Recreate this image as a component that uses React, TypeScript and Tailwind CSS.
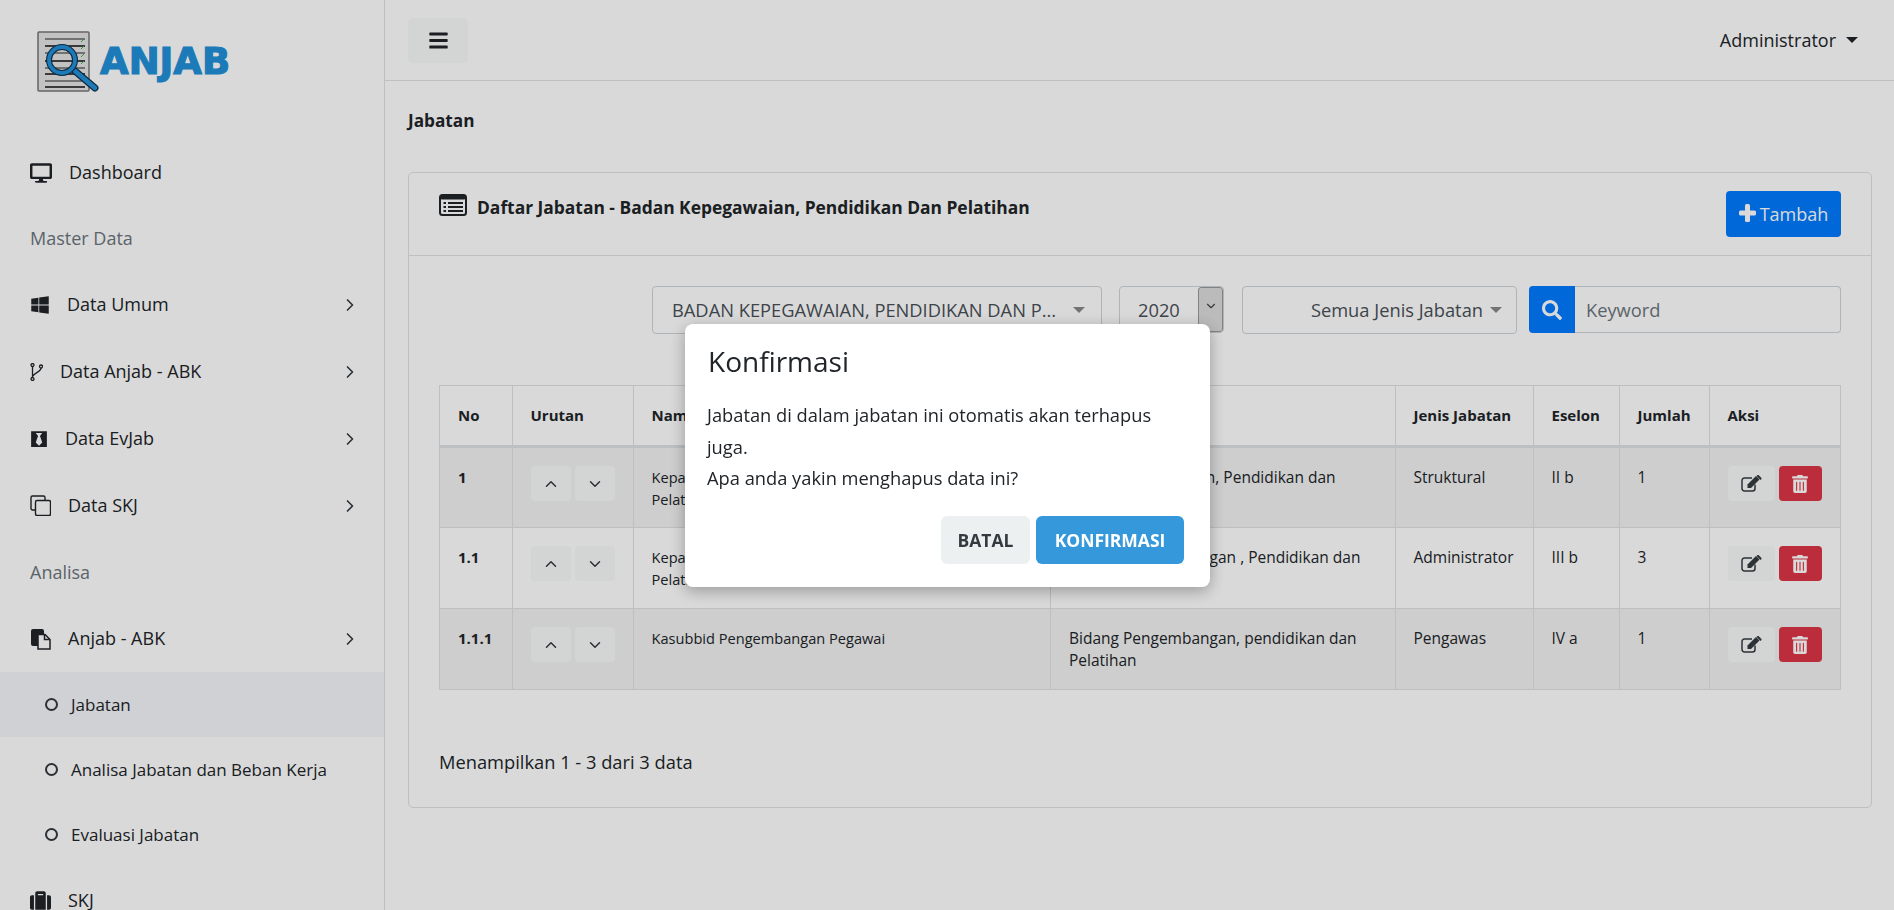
import type { ReactNode } from 'react';
import { ChevronDown, ChevronRight, ChevronUp } from 'lucide-react';
import { FaBars, FaBlackTie, FaDesktop, FaSearch, FaSuitcase, FaTrashAlt, FaWindows } from 'react-icons/fa';

const rows = [
  { no: '1', nama: 'Kepala Badan Kepegawaian, Pendidikan dan\nPelatihan', unit: 'Badan Kepegawaian, Pendidikan dan Pelatihan', jenis: 'Struktural', eselon: 'II b', jumlah: '1' },
  { no: '1.1', nama: 'Kepala Bidang Pengembangan, Pendidikan dan\nPelatihan', unit: 'Bidang Pengembangan , Pendidikan dan Pelatihan', jenis: 'Administrator', eselon: 'III b', jumlah: '3' },
  { no: '1.1.1', nama: 'Kasubbid Pengembangan Pegawai', unit: 'Bidang Pengembangan, pendidikan dan Pelatihan', jenis: 'Pengawas', eselon: 'IV a', jumlah: '1' },
];

const Logo = () => (
  <svg width="62" height="62" viewBox="0 0 62 62" className="shrink-0">
    <rect x="1" y="1" width="51" height="59" rx="1" fill="#e4e4e4" stroke="#777" strokeWidth="1.5" />
    {[8, 15, 22, 30, 37, 43, 50, 56].map((y, i) => (
      <line key={y} x1="8" x2="48" y1={y} y2={y} stroke={i % 2 ? '#111' : '#666'} strokeWidth="1.6" />
    ))}
    {[10, 17, 25, 32].map((y) => (
      <line key={y} x1="44" x2="47" y1={y + 1} y2={y - 2} stroke="#3fae49" strokeWidth="1" />
    ))}
    <line x1="38" y1="40" x2="58" y2="57" stroke="#10324a" strokeWidth="7" strokeLinecap="round" />
    <line x1="38" y1="40" x2="58" y2="57" stroke="#2190d9" strokeWidth="4.5" strokeLinecap="round" />
    <circle cx="25" cy="29" r="13" fill="none" stroke="#10324a" strokeWidth="6" />
    <circle cx="25" cy="29" r="13" fill="none" stroke="#2190d9" strokeWidth="3.8" />
  </svg>
);

const FilesIcon = () => (
  <svg width="21" height="22" viewBox="0 0 21 22" className="shrink-0 text-[#212529]">
    <path d="M1 3a2 2 0 0 1 2-2h9a2 2 0 0 1 2 2v15H3a2 2 0 0 1-2-2z" fill="currentColor" />
    <path d="M8 6.500h7l5 5V21H8z" fill="#fff" stroke="currentColor" strokeWidth="1.5" />
    <path d="M14.500 6.500v5h5" fill="none" stroke="currentColor" strokeWidth="1.5" />
  </svg>
);

const ForkIcon = () => (
  <svg width="13" height="18" viewBox="0 0 13 18" fill="none" stroke="#212529" strokeWidth="1.3" className="shrink-0">
    <circle cx="2.500" cy="2" r="1.500" />
    <circle cx="2.500" cy="16" r="1.500" />
    <circle cx="11" cy="3.500" r="1.500" />
    <path d="M2.500 3.500v11M11 5c0 3.500-6 4.500-8 8" />
  </svg>
);

const CloneIcon = () => (
  <svg width="21" height="21" viewBox="0 0 21 21" fill="none" stroke="#212529" strokeWidth="1.4" className="shrink-0">
    <path d="M5 15H2.500A1.500 1.500 0 0 1 1 13.500V2.500A1.500 1.500 0 0 1 2.500 1h11A1.500 1.500 0 0 1 15 2.500V5" />
    <rect x="5.500" y="5.500" width="15" height="15" rx="1.500" />
  </svg>
);

const ListIcon = () => (
  <svg width="28" height="22" viewBox="0 0 28 22" className="shrink-0 text-[#212529]">
    <rect x="1" y="1" width="26" height="20" rx="2.500" fill="none" stroke="currentColor" strokeWidth="2" />
    <rect x="1" y="1" width="26" height="4.500" rx="2" fill="currentColor" />
    {[9, 13, 17].map((y) => (
      <g key={y}>
        <rect x="4.500" y={y - 1} width="2.500" height="2" fill="currentColor" />
        <rect x="9" y={y - 1} width="15" height="2" fill="currentColor" />
      </g>
    ))}
  </svg>
);

const EditIcon = () => (
  <svg width="21" height="17" viewBox="0 0 21 17" fill="none" className="text-[#343a40]">
    <path d="M14 9.500v4a2.500 2.500 0 0 1-2.500 2.500H3.500A2.500 2.500 0 0 1 1 13.500v-8A2.500 2.500 0 0 1 3.500 3H11" stroke="currentColor" strokeWidth="1.5" />
    <path d="M6.500 9.500 15 1l3.500 3.500L10 13H6.500z" fill="currentColor" />
    <path d="M16.500 0h1l3 3v1l-1 1L15.500 1z" fill="currentColor" />
  </svg>
);

const PlusIcon = () => (
  <svg width="17" height="18" viewBox="0 0 17 18" fill="currentColor" className="shrink-0 mb-[3px]">
    <rect x="6" y="0" width="5" height="18" rx="1.500" />
    <rect x="0" y="6.500" width="17" height="5" rx="1.500" />
  </svg>
);

const MenuItem = ({ icon, label, arrow }: { icon: ReactNode; label: string; arrow?: boolean }) => (
  <div className="h-[67px] pl-[30px] pr-[24px] flex items-center gap-[17px] text-[#212529]">
    {icon}
    <span className="flex-1">{label}</span>
    {arrow && <ChevronRight className="w-[20px] h-[20px] text-[#343a40]" strokeWidth={2} />}
  </div>
);

const SubItem = ({ label, active }: { label: string; active?: boolean }) => (
  <div className={`h-[65px] pl-[45px] flex items-center gap-[13px] text-[17px] text-[#212529] ${active ? 'bg-[#f5f6fa]' : ''}`}>
    <span className="w-[13px] h-[13px] rounded-full border-2 border-[#343a40]" />
    <span>{label}</span>
  </div>
);

const Sidebar = () => (
  <aside className="w-[385px] h-[910px] shrink-0 border-r border-[#dee2e6] overflow-hidden text-[18px]">
    <div className="h-[139px] pl-[37px] pt-[31px] flex items-start gap-[1px]">
      <Logo />
      <span className="font-['DejaVu_Sans',sans-serif] font-bold text-[37px] leading-none mt-[12px] [-webkit-text-stroke:1.2px_#2190d9] text-[#2190d9]">ANJAB</span>
    </div>
    <MenuItem icon={<FaDesktop className="w-[22px] h-[22px]" />} label="Dashboard" />
    <div className="h-[65px] pl-[30px] flex items-center text-[#6c757d]">Master Data</div>
    <MenuItem icon={<FaWindows className="w-[20px] h-[20px]" />} label="Data Umum" arrow />
    <MenuItem icon={<ForkIcon />} label="Data Anjab - ABK" arrow />
    <MenuItem icon={<FaBlackTie className="w-[18px] h-[18px]" />} label="Data EvJab" arrow />
    <MenuItem icon={<CloneIcon />} label="Data SKJ" arrow />
    <div className="h-[66px] pl-[30px] flex items-center text-[#6c757d]">Analisa</div>
    <MenuItem icon={<FilesIcon />} label="Anjab - ABK" arrow />
    <SubItem label="Jabatan" active />
    <SubItem label="Analisa Jabatan dan Beban Kerja" />
    <SubItem label="Evaluasi Jabatan" />
    <MenuItem icon={<FaSuitcase className="w-[21px] h-[21px]" />} label="SKJ" />
  </aside>
);

const Filters = () => (
  <div className="flex justify-end items-start text-[18.300px] text-[#495057]">
    <div className="w-[450px] h-[48px] border border-[#ced4da] rounded-[4px] pl-[19px] pr-[16px] flex items-center justify-between">
      <span>BADAN KEPEGAWAIAN, PENDIDIKAN DAN P...</span>
      <span className="w-0 h-0 border-x-[6px] border-x-transparent border-t-[6px] border-t-[#888]" />
    </div>
    <div className="w-[105px] h-[47px] ml-[17px] border border-[#ced4da] rounded-[4px] flex items-stretch overflow-hidden">
      <span className="flex-1 pl-[18px] pt-[9px]">2020</span>
      <span className="w-[25px] bg-[#dcdcdc] border border-[#999] rounded-[3px] flex justify-center pt-[11px]">
        <ChevronDown className="w-[14px] h-[14px] text-[#444]" />
      </span>
    </div>
    <div className="w-[275px] h-[48px] ml-[18px] border border-[#ced4da] rounded-[4px] pr-[14px] flex items-center justify-end gap-[7px]">
      <span>Semua Jenis Jabatan</span>
      <span className="w-0 h-0 border-x-[6px] border-x-transparent border-t-[6px] border-t-[#888]" />
    </div>
    <div className="w-[312px] h-[47px] ml-[12px] flex">
      <span className="w-[46px] bg-[#007bff] rounded-l-[4px] flex items-center justify-center text-white">
        <FaSearch className="w-[20px] h-[20px]" />
      </span>
      <span className="flex-1 border border-l-0 border-[#ced4da] rounded-r-[4px] pl-[11px] flex items-center text-[#6c757d]">Keyword</span>
    </div>
  </div>
);

const TableRow = ({ row, striped }: { row: (typeof rows)[number]; striped: boolean }) => (
  <tr className={`h-[81px] ${striped ? 'bg-[#f2f2f2]' : ''}`}>
    <td className="border border-[#dee2e6] px-[18px] pt-[18px] align-top font-bold text-[15px]">{row.no}</td>
    <td className="border border-[#dee2e6] px-[18px] pt-[18px] align-top">
      <div className="flex gap-[4px]">
        <span className="w-[40px] h-[35px] bg-[#f8f9fa] rounded-[4px] flex items-center justify-center">
          <ChevronUp className="w-[18px] h-[18px] text-[#343a40]" />
        </span>
        <span className="w-[40px] h-[35px] bg-[#f8f9fa] rounded-[4px] flex items-center justify-center">
          <ChevronDown className="w-[18px] h-[18px] text-[#343a40]" />
        </span>
      </div>
    </td>
    <td className="border border-[#dee2e6] px-[18px] pt-[18px] align-top leading-[22px] text-[14.600px] whitespace-pre-line">{row.nama}</td>
    <td className="border border-[#dee2e6] px-[18px] pt-[18px] align-top leading-[22px]">{row.unit}</td>
    <td className="border border-[#dee2e6] px-[18px] pt-[18px] align-top">{row.jenis}</td>
    <td className="border border-[#dee2e6] px-[18px] pt-[18px] align-top">{row.eselon}</td>
    <td className="border border-[#dee2e6] px-[18px] pt-[18px] align-top">{row.jumlah}</td>
    <td className="border border-[#dee2e6] pl-[18px] pt-[18px] align-top">
      <div className="flex gap-[4px]">
        <span className="w-[47px] h-[35px] bg-[#f8f9fa] rounded-[4px] flex items-center justify-center">
          <EditIcon />
        </span>
        <span className="w-[43px] h-[35px] bg-[#dc3545] rounded-[4px] flex items-center justify-center">
          <FaTrashAlt className="w-[16px] h-[18px] text-white" />
        </span>
      </div>
    </td>
  </tr>
);

const Heading = ({ children }: { children: ReactNode }) => (
  <th className="border border-[#dee2e6] border-b-[3px] px-[18px] text-left font-bold text-[15px]">{children}</th>
);

const ConfirmDialog = () => (
  <div className="fixed inset-0 bg-black/15">
    <div className="absolute left-[685px] top-[324px] w-[525px] h-[263px] bg-white rounded-[8px] shadow-[0_4px_16px_rgba(0,0,0,0.3)] text-[#212529]">
      <h2 className="ml-[23px] mt-[17px] text-[28px] leading-[40px]">Konfirmasi</h2>
      <p className="ml-[22px] mr-[40px] mt-[18px] text-[18.300px] leading-[31.500px]">
        Jabatan di dalam jabatan ini otomatis akan terhapus juga.
        <br />
        Apa anda yakin menghapus data ini?
      </p>
      <div className="absolute right-[26px] bottom-[23px] flex gap-[6px] text-[17.500px] font-bold">
        <button className="w-[89px] h-[48px] bg-[#ecf0f1] rounded-[6px] text-[#343a40]">BATAL</button>
        <button className="w-[148px] h-[48px] bg-[#3498db] rounded-[6px] text-white">KONFIRMASI</button>
      </div>
    </div>
  </div>
);

export default function App() {
  return (
    <div className="h-[910px] overflow-hidden flex bg-white font-['Open_Sans',sans-serif] text-[#212529]">
      <Sidebar />
      <main className="flex-1 min-w-0">
        <header className="h-[81px] border-b border-[#dee2e6] pl-[23px] pr-[36px] flex items-center justify-between">
          <button className="w-[60px] h-[45px] bg-[#f8f9fa] rounded-[5px] flex items-center justify-center">
            <FaBars className="w-[21px] h-[21px] text-[#212529]" />
          </button>
          <div className="flex items-center gap-[10px] text-[18px]">
            <span>Administrator</span>
            <span className="w-0 h-0 border-x-[6px] border-x-transparent border-t-[6px] border-t-[#212529]" />
          </div>
        </header>
        <div className="pl-[23px] pr-[22px]">
          <h1 className="h-[91px] pt-[28px] text-[17.200px] leading-[24px] font-bold">Jabatan</h1>
          <section className="h-[636px] border border-[#dee2e6] rounded-[5px]">
            <div className="h-[83px] border-b border-[#dee2e6] pl-[30px] pr-[30px] pt-[18px] flex justify-between">
              <div className="flex gap-[10px] text-[17.400px] font-bold pt-[3px]">
                <ListIcon />
                <span>Daftar Jabatan - Badan Kepegawaian, Pendidikan Dan Pelatihan</span>
              </div>
              <button className="w-[115px] h-[46px] bg-[#007bff] rounded-[4px] text-white text-[18px] flex items-center justify-center gap-[4px]">
                <PlusIcon />
                Tambah
              </button>
            </div>
            <div className="px-[30px] pt-[30px]">
              <Filters />
              <table className="mt-[51px] w-full table-fixed border-collapse text-[15.500px]">
                <colgroup>
                  <col className="w-[72.500px]" />
                  <col className="w-[121px]" />
                  <col className="w-[417.500px]" />
                  <col className="w-[344.500px]" />
                  <col className="w-[138px]" />
                  <col className="w-[86px]" />
                  <col className="w-[90px]" />
                  <col />
                </colgroup>
                <thead>
                  <tr className="h-[61px]">
                    <Heading>No</Heading>
                    <Heading>Urutan</Heading>
                    <Heading>Nama Jabatan</Heading>
                    <Heading>Unit Kerja</Heading>
                    <Heading>Jenis Jabatan</Heading>
                    <Heading>Eselon</Heading>
                    <Heading>Jumlah</Heading>
                    <Heading>Aksi</Heading>
                  </tr>
                </thead>
                <tbody>
                  {rows.map((row, i) => (
                    <TableRow key={row.no} row={row} striped={i % 2 === 0} />
                  ))}
                </tbody>
              </table>
              <p className="mt-[58px] text-[18.300px] leading-[27px]">Menampilkan 1 - 3 dari 3 data</p>
            </div>
          </section>
        </div>
      </main>
      <ConfirmDialog />
    </div>
  );
}
